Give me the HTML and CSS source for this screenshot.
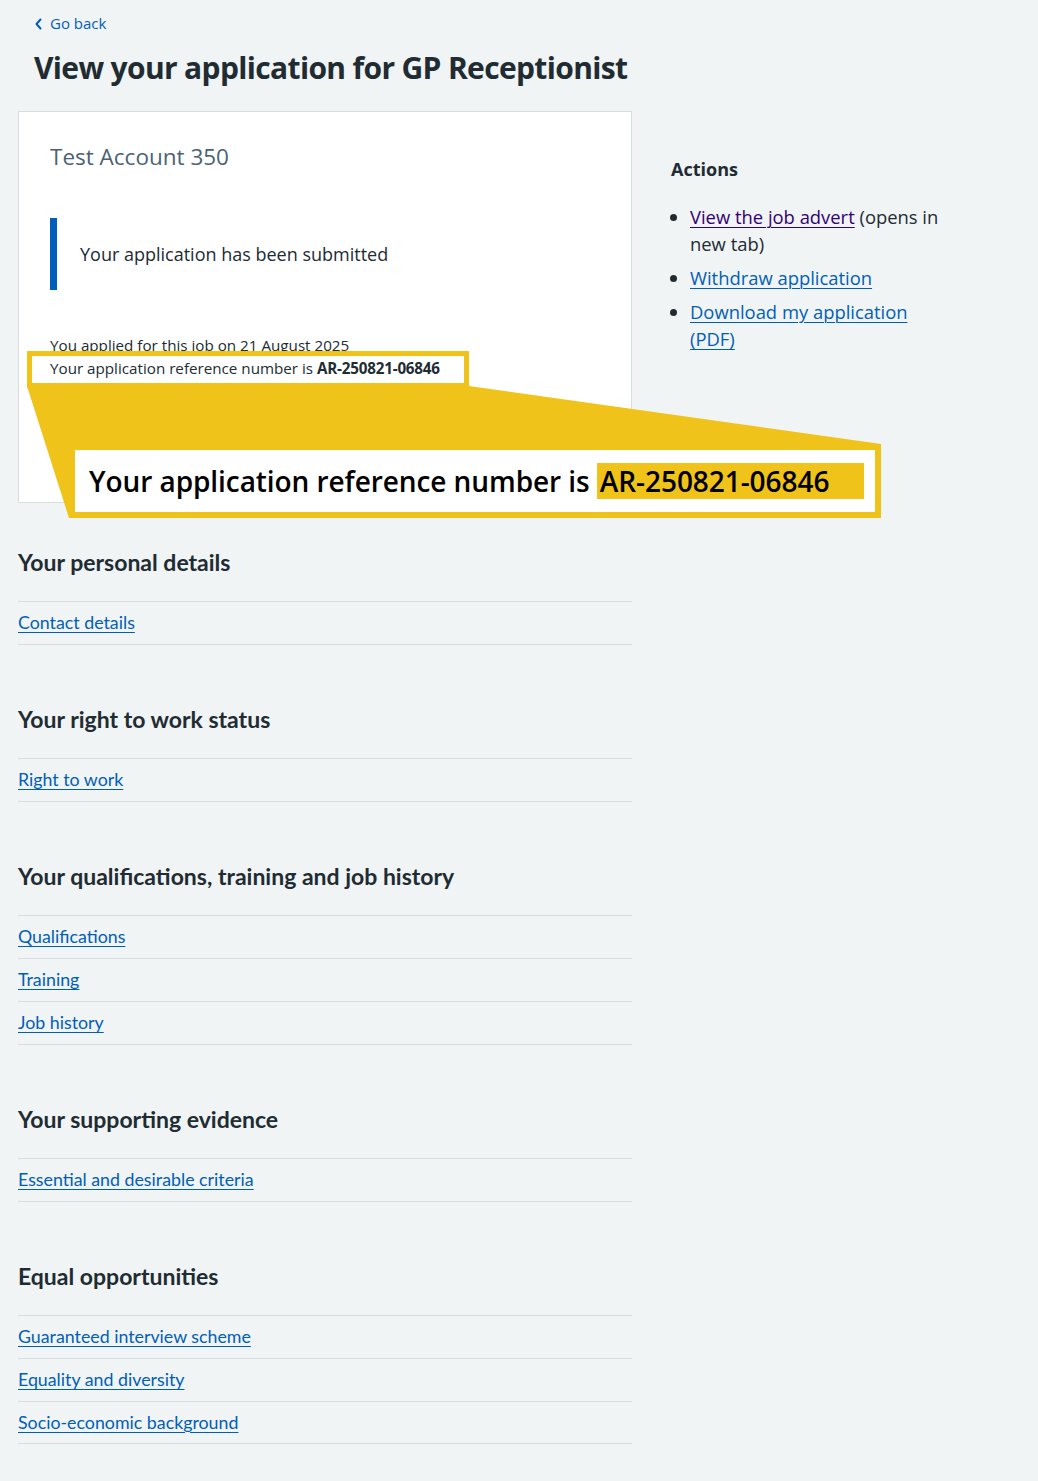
FILE: index.html
```html
<!DOCTYPE html>
<html lang="en">
<head>
<meta charset="utf-8">
<title>View your application for GP Receptionist</title>
<link rel="stylesheet" href="styles.css">
</head>
<body>
<div class="page">
  <a class="back" href="#"><svg class="back-icon" width="10" height="12" viewBox="0 0 10 12" aria-hidden="true"><path d="M6.5 1.5 L2.5 6 L6.5 10.5" fill="none" stroke="#005eb8" stroke-width="2" stroke-linecap="round" stroke-linejoin="round"/></svg>Go back</a>
  <h1 class="title">View your application for GP Receptionist</h1>

  <div class="layout">
    <div class="main">
      <div class="card">
        <p class="account">Test Account 350</p>
        <div class="inset"><p>Your application has been submitted</p></div>
        <p class="meta">You applied for this job on 21 August 2025<br>Your application reference number is <strong>AR-250821-06846</strong></p>
      </div>

      <section class="group">
        <h2 class="group-title">Your personal details</h2>
        <ul class="rows">
          <li><a href="#">Contact details</a></li>
        </ul>
      </section>

      <section class="group">
        <h2 class="group-title">Your right to work status</h2>
        <ul class="rows">
          <li><a href="#">Right to work</a></li>
        </ul>
      </section>

      <section class="group">
        <h2 class="group-title">Your qualifications, training and job history</h2>
        <ul class="rows">
          <li><a href="#">Qualifications</a></li>
          <li><a href="#">Training</a></li>
          <li><a href="#">Job history</a></li>
        </ul>
      </section>

      <section class="group">
        <h2 class="group-title">Your supporting evidence</h2>
        <ul class="rows">
          <li><a href="#">Essential and desirable criteria</a></li>
        </ul>
      </section>

      <section class="group">
        <h2 class="group-title">Equal opportunities</h2>
        <ul class="rows">
          <li><a href="#">Guaranteed interview scheme</a></li>
          <li><a href="#">Equality and diversity</a></li>
          <li><a href="#">Socio-economic background</a></li>
        </ul>
      </section>
    </div>

    <aside class="actions">
      <h2 class="actions-title">Actions</h2>
      <ul class="actions-list">
        <li><a class="visited" href="#">View the job advert</a> (opens in new tab)</li>
        <li><a href="#">Withdraw application</a></li>
        <li><a href="#">Download my application (PDF)</a></li>
      </ul>
    </aside>
  </div>

  <div class="callout" aria-hidden="true">
    <svg class="callout-shape" width="1038" height="1481" viewBox="0 0 1038 1481">
      <polygon points="27,386 469,386 881,444 881,518 69,518" fill="#efc319"/>
    </svg>
    <div class="callout-small"></div>
    <div class="callout-big">Your application reference number is <span class="callout-mark">AR-250821-06846</span></div>
  </div>
</div>
</body>
</html>
```

FILE: styles.css
```css
* { box-sizing: border-box; }

html, body {
  margin: 0;
  padding: 0;
  background: #f0f4f5;
}

body {
  font-family: "Open Sans", "Noto Sans", sans-serif;
  color: #212b32;
}

.page {
  position: relative;
  width: 1038px;
  min-height: 1481px;
  padding: 11px 0 0 18px;
}

.back {
  display: inline-flex;
  align-items: center;
  gap: 6px;
  margin-left: 16px;
  font-size: 15px;
  line-height: 24px;
  color: #005eb8;
  text-decoration: none;
}

.back-icon { display: block; margin-top: 1px; }

.title {
  margin: 13px 0 0 16px;
  font-size: 30px;
  line-height: 40px;
  font-weight: 700;
  letter-spacing: -0.65px;
  color: #212b32;
}

.layout {
  display: flex;
  align-items: flex-start;
  gap: 39px;
  margin-top: 23px;
}

.main { width: 614px; flex: none; }

.card {
  background: #fff;
  border: 1px solid #d8dde0;
  padding: 29px 31px 122px;
}

.account {
  margin: 0;
  font-size: 22.5px;
  line-height: 32px;
  color: #4c6272;
}

.inset {
  margin-top: 45px;
  border-left: 7px solid #005eb8;
  padding: 22px 0 22px 23px;
}

.inset p {
  margin: 0;
  font-size: 18px;
  line-height: 28px;
}

.meta {
  margin: 44px 0 0;
  font-size: 15.2px;
  line-height: 23px;
}

.meta strong { font-weight: 700; letter-spacing: -0.2px; }

.group { margin-top: 43.5px; }
.group + .group { margin-top: 59px; }

.group-title {
  margin: 0 0 24.5px;
  font-family: "Lato", sans-serif;
  font-size: 23px;
  line-height: 30px;
  font-weight: 700;
  color: #212b32;
}

.rows {
  list-style: none;
  margin: 0;
  padding: 0;
  border-top: 1px solid #d8dde0;
}

.rows li {
  border-bottom: 1px solid #d8dde0;
  padding: 8px 0;
  font-family: "Lato", sans-serif;
  font-size: 17.8px;
  line-height: 25.7px;
}

.rows a {
  color: #005eb8;
  text-decoration: underline;
  text-underline-offset: 3px;
  text-decoration-thickness: 1px;
}

.actions {
  width: 276px;
  flex: none;
  padding-top: 45px;
}

.actions-title {
  margin: 0;
  font-size: 18px;
  line-height: 26px;
  font-weight: 700;
}

.actions-list {
  margin: 21px 0 0;
  padding-left: 19px;
  font-size: 18.4px;
  line-height: 27px;
}

.actions-list li { margin-bottom: 7px; }

.actions-list a {
  color: #005eb8;
  text-underline-offset: 3px;
  text-decoration-thickness: 1px;
}

.actions-list a.visited { color: #330072; }

.callout {
  position: absolute;
  inset: 0;
  pointer-events: none;
}

.callout-shape {
  position: absolute;
  left: 0;
  top: 0;
}

.callout-small {
  position: absolute;
  left: 27px;
  top: 351px;
  width: 442px;
  height: 37px;
  border: 5px solid #efc319;
}

.callout-big {
  position: absolute;
  left: 69px;
  top: 444px;
  width: 812px;
  height: 74px;
  border: 6px solid #efc319;
  background: #fff;
  padding: 0 0 0 14px;
  display: flex;
  align-items: center;
  font-size: 28px;
  font-weight: 600;
  color: #000;
  letter-spacing: -0.07px;
  white-space: pre;
}

.callout-mark {
  display: inline-block;
  background: #efc319;
  padding: 1px 35px 1px 3px;
  line-height: 34px;
}
```
